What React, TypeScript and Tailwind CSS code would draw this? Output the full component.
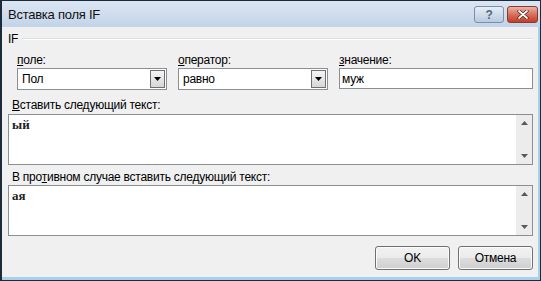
import React from "react";

const ui = "[font-family:'Liberation_Sans',Arial,sans-serif] text-[12px] leading-[16px] tracking-[-0.25px] text-black";

const Arrow = ({ dir, small }: { dir: "up" | "down"; small?: boolean }) => (
  <svg width={7} height={4} viewBox="0 0 7 4" className={small ? "fill-[#5a5a5a]" : "fill-black"}>
    {dir === "down" ? <path d="M0 0h7L3.5 4z" /> : <path d="M0 4h7L3.5 0z" />}
  </svg>
);

const Combo = ({ value }: { value: string }) => (
  <div className="w-[150px] h-[22px] flex items-stretch bg-white border border-[#8a8f97] p-px">
    <div className="flex-1 flex items-center pl-[3px]">{value}</div>
    <div className="w-[15px] flex items-center justify-center border border-[#707070] bg-[linear-gradient(#f4f4f4_0%,#e6e6e6_50%,#d6d6d6_100%)]">
      <Arrow dir="down" />
    </div>
  </div>
);

const TextBox = ({ value }: { value: string }) => (
  <div className="h-[51px] flex bg-white border border-[#8a8f97]">
    <div className="flex-1 pl-[3px] pt-[3px] [font-family:'Liberation_Serif',serif] font-bold text-[13px] leading-[14px] tracking-normal text-[#222]">
      {value}
    </div>
    <div className="w-[16px] bg-[#ececec] flex flex-col items-center justify-between py-[6px]">
      <Arrow dir="up" small />
      <Arrow dir="down" small />
    </div>
  </div>
);

const Button = ({ label }: { label: string }) => (
  <div className="w-[75px] h-[24px] flex items-center justify-center rounded-[3px] border border-[#707070] shadow-[inset_0_0_0_1px_#fbfbfb] bg-[linear-gradient(#f2f2f2_0%,#ebebeb_50%,#dddddd_50%,#cfcfcf_100%)]">
    {label}
  </div>
);

export default function App() {
  return (
    <div className={`w-[541px] h-[281px] bg-[#1d2a3a] pl-[2px] pt-px pr-px pb-px ${ui}`}>
      <div className="h-full flex flex-col bg-[#a4d2ee]">
        <div className="h-[26px] flex items-start bg-[linear-gradient(#dbe6f3,#c3d4e8)] pl-[6px] pr-[2px]">
          <div className="flex-1 pt-[6px] text-[13px] text-[#111]">Вставка поля IF</div>
          <div className="flex gap-[3px] pt-[5px]">
            <div className="w-[30px] h-[17px] rounded-[3px] border border-[#7b8fa8] bg-[linear-gradient(#e6eef7_0%,#cfdcea_50%,#b9cbe0_100%)] flex items-center justify-center text-[12px] leading-none font-bold text-[#56677c]">
              ?
            </div>
            <div className="w-[31px] h-[17px] rounded-[3px] border border-[#8a3a30] bg-[linear-gradient(#eab3a6_0%,#d7705d_50%,#c33e27_100%)] flex items-center justify-center">
              <svg width="12" height="9" viewBox="0 0 12 9">
                <path d="M2 1l8 7M10 1L2 8" stroke="#4a1a12" strokeWidth="3.2" strokeLinecap="round" />
                <path d="M2 1l8 7M10 1L2 8" stroke="#fff" strokeWidth="1.8" strokeLinecap="round" />
              </svg>
            </div>
          </div>
        </div>
        <div className="flex-1 mr-[2px] mb-[3px] bg-[#f0f0f0] flex flex-col pl-[6px] pr-[5px]">
          <div className="mt-[4px] flex items-center gap-[4px]">
            <span>IF</span>
            <div className="flex-1 h-[2px] border-t border-[#d5dfe5] bg-white" />
          </div>
          <div className="mt-[5px] pl-[9px] flex gap-[11px]">
            <div className="flex flex-col">
              <span>
                <u>п</u>оле:
              </span>
              <Combo value="Пол" />
            </div>
            <div className="flex flex-col">
              <span>
                <u>о</u>ператор:
              </span>
              <Combo value="равно" />
            </div>
            <div className="flex flex-col flex-1">
              <span>
                <u>з</u>начение:
              </span>
              <div className="h-[21px] bg-white border border-[#8a8f97] flex items-center pl-[2px]">муж</div>
            </div>
          </div>
          <div className="mt-[7px] pl-[4px]">
            <u>В</u>ставить следующий текст:
          </div>
          <div className="mt-px">
            <TextBox value="ый" />
          </div>
          <div className="mt-[4px] pl-[4px]">
            В про<u>т</u>ивном случае вставить следующий текст:
          </div>
          <div>
            <TextBox value="ая" />
          </div>
          <div className="mt-[10px] flex justify-end gap-[8px]">
            <Button label="OK" />
            <Button label="Отмена" />
          </div>
        </div>
      </div>
    </div>
  );
}
